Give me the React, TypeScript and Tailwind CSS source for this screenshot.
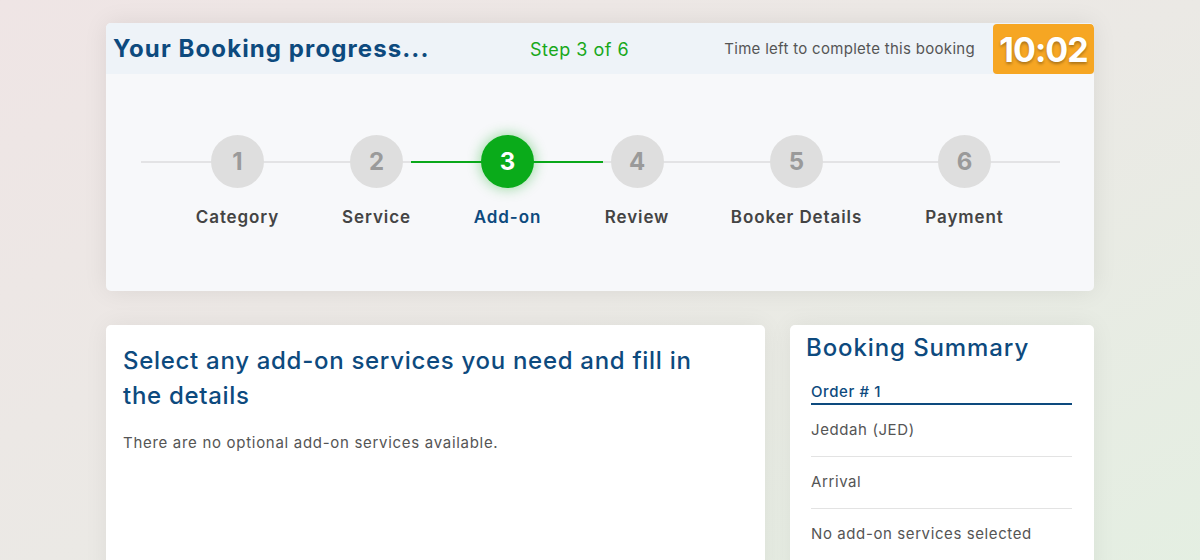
const steps = [
  { n: 1, label: "Category", w: "w-[84px]" },
  { n: 2, label: "Service", w: "w-[66px]" },
  { n: 3, label: "Add-on", w: "w-[68px]", active: true },
  { n: 4, label: "Review", w: "w-[63px]" },
  { n: 5, label: "Booker Details", w: "w-[128px]" },
  { n: 6, label: "Payment", w: "w-[80px]" },
];

const summary = ["Jeddah (JED)", "Arrival", "No add-on services selected"];

export default function App() {
  return (
    <main className="min-h-screen bg-linear-to-br from-[#efe5e5] via-[#ebe9e5] to-[#e4efe2] font-['Inter',sans-serif] text-[#555]">
      <div className="mx-auto w-[988px] pt-[23px]">
        <section className="overflow-hidden rounded-[5px] bg-[#f7f8fa] shadow-[0_0_24px_rgba(0,0,0,0.08)]">
          <header className="flex h-[51px] items-center bg-[#eef3f8] pl-[7px] pt-[1px]">
            <h1 className="w-[400px] text-[24px] font-bold tracking-[1.1px] text-[#0d4a7e]">Your Booking progress...</h1>
            <p className="ml-[17px] text-[18px] tracking-[0.5px] text-[#18a81b]">Step 3 of 6</p>
            <p className="ml-auto mr-[18px] text-[15px] tracking-[0.3px] text-[#555]">Time left to complete this booking</p>
            <div className="flex h-[50px] w-[101px] items-center justify-center rounded-[4px] bg-[#f6a623] text-[34px] font-bold tracking-[-1px] text-white [text-shadow:0_2px_3px_rgba(0,0,0,0.3)]">
              10:02
            </div>
          </header>

          <div className="relative h-[217px] pt-[61px]">
            <div className="absolute left-[35px] right-[34px] top-[87px] h-[2px] bg-[#e3e3e5]" />
            <div className="absolute left-[305px] top-[87px] h-[2px] w-[192px] bg-[#0aa81a]" />
            <ol className="relative flex justify-center gap-16">
              {steps.map((s) => (
                <li key={s.n} className={`flex flex-col items-center ${s.w}`}>
                  <span
                    className={
                      s.active
                        ? "flex h-[53px] w-[53px] items-center justify-center rounded-full bg-[#0aab1a] text-[24px] font-bold text-white shadow-[0_0_14px_rgba(10,171,26,0.45)]"
                        : "flex h-[53px] w-[53px] items-center justify-center rounded-full bg-[#dedede] text-[24px] font-bold text-[#9a9a9a]"
                    }
                  >
                    {s.n}
                  </span>
                  <span
                    className={`mt-[17px] whitespace-nowrap text-[17px] font-semibold tracking-[0.9px] ${s.active ? "text-[#0d4a7e]" : "text-[#444]"}`}
                  >
                    {s.label}
                  </span>
                </li>
              ))}
            </ol>
          </div>
        </section>

        <div className="mt-[34px] flex gap-[25px]">
          <section className="h-[260px] w-[659px] rounded-[5px] bg-white px-[17px] pt-[18px] shadow-[0_0_24px_rgba(0,0,0,0.06)]">
            <h2 className="w-[590px] text-[24px] font-medium leading-[35px] tracking-[0.7px] text-[#0d4a7e]">
              Select any add-on services you need and fill in the details
            </h2>
            <p className="mt-[19px] text-[15px] tracking-[0.7px] text-[#555]">There are no optional add-on services available.</p>
          </section>

          <aside className="h-[260px] w-[304px] rounded-[5px] bg-white pl-[16px] pr-[22px] pt-[7px] shadow-[0_0_24px_rgba(0,0,0,0.06)]">
            <h2 className="text-[24px] font-medium leading-[32px] tracking-[0.9px] text-[#0d4a7e]">Booking Summary</h2>
            <div className="ml-[5px] mt-[17px]">
              <p className="border-b-2 border-[#0d4a7e] text-[15px] font-medium leading-[22px] tracking-[0.6px] text-[#0d4a7e]">
                Order # 1
              </p>
              <ul>
                {summary.map((item) => (
                  <li key={item} className="flex h-[52px] items-center border-b border-[#e3e3e3] text-[15px] tracking-[0.6px] text-[#555]">
                    {item}
                  </li>
                ))}
              </ul>
            </div>
          </aside>
        </div>
      </div>
    </main>
  );
}
